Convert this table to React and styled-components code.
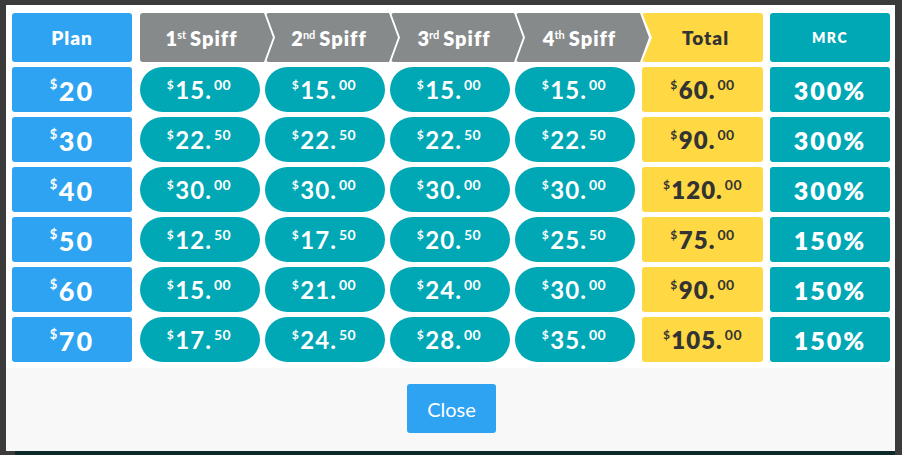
import React from "react";
import styled, { createGlobalStyle } from "styled-components";

const GlobalStyle = createGlobalStyle`
    html, body {
        margin: 0;
        padding: 0;
        background: #3b3b3b;
    }
    * {
        box-sizing: border-box;
    }
`;

const blue = "#2ea3f2";
const teal = "#00a8b5";
const yellow = "#ffd944";
const gray = "#878a8b";

const Page = styled.div`
    width: 902px;
    height: 455px;
    padding: 5px 7px 0 6px;
    display: flex;
    flex-direction: column;
    overflow: hidden;
`;

const Modal = styled.div`
    width: 889px;
    height: 446px;
    background: #fff;
    display: flex;
    flex-direction: column;
`;

const TableArea = styled.div`
    padding: 8px 5px 6px 6px;
`;

const Grid = styled.div`
    display: grid;
    grid-template-columns: 128px repeat(3, 125px) 126px 129px 120px;
    grid-template-rows: 49px repeat(6, 45px);
    row-gap: 5px;
    font-family: "Lato", "Liberation Sans", sans-serif;
`;

const Box = styled.div`
    width: ${(p) => p.$w || 120}px;
    height: 100%;
    margin-left: ${(p) => p.$ml || 0}px;
    display: flex;
    align-items: center;
    justify-content: center;
    border-radius: 3px;
    background: ${(p) => p.$bg};
    color: ${(p) => p.$fg || "#fff"};
    font-weight: 800;
`;

const HeadLabel = styled.span`
    font-size: ${(p) => p.$size || 19}px;
    font-weight: 800;
    letter-spacing: ${(p) => p.$ls ?? 1}px;
`;

const Chevron = styled.div`
    position: relative;
    z-index: 1;
    height: 100%;
    margin-left: ${(p) => (p.$notch ? 1 : 0)}px;
    width: calc(100% + ${(p) => (p.$notch ? 7 : 8)}px);
    background: ${gray};
    color: #fff;
    display: flex;
    align-items: center;
    justify-content: center;
    padding-left: ${(p) => (p.$notch ? 4 : 0)}px;
    padding-right: 10px;
    clip-path: ${(p) =>
        p.$notch
            ? "polygon(0 0, calc(100% - 9px) 0, 100% 50%, calc(100% - 9px) 100%, 0 100%, 9px 50%)"
            : "polygon(0 0, calc(100% - 9px) 0, 100% 50%, calc(100% - 9px) 100%, 0 100%)"};
    border-radius: 3px 0 0 3px;
`;

const TotalHead = styled(Box)`
    clip-path: polygon(0 0, 100% 0, 100% 100%, 0 100%, 10px 50%);
    padding-left: 6px;
`;

const Ord = styled.sup`
    font-size: 11px;
    vertical-align: 0;
    position: relative;
    top: -7px;
    margin-left: -1px;
    margin-right: 4px;
    font-weight: 700;
    letter-spacing: 0;
`;

const Pill = styled.div`
    width: 120px;
    height: 100%;
    border-radius: 23px;
    background: ${teal};
    color: #fff;
    display: flex;
    align-items: center;
    justify-content: center;
    padding-right: 2px;
`;

const Money = styled.span`
    font-size: 24px;
    font-weight: ${(p) => p.$weight || 700};
    line-height: 1;
    letter-spacing: 1px;
    display: inline-flex;
    align-items: flex-start;
`;

const PlanMoney = styled(Money)`
    font-size: 27px;
    font-weight: 900;
    letter-spacing: 2px;
    margin-top: 1px;
`;

const Small = styled.span`
    font-size: ${(p) => p.$size || 12}px;
    font-weight: 700;
    line-height: 1;
    letter-spacing: 0.5px;
    margin-top: ${(p) => p.$top || 0}px;
    margin-right: ${(p) => p.$mr || 0}px;
    margin-left: ${(p) => p.$ml || 0}px;
`;

const Percent = styled.span`
    font-size: 25px;
    font-weight: 800;
    letter-spacing: 2px;
`;

const Footer = styled.div`
    flex: 1;
    background: #f8f8f8;
    display: flex;
    justify-content: center;
    padding-top: 16px;
    padding-left: 2px;
`;

const CloseButton = styled.button`
    width: 89px;
    height: 49px;
    border: none;
    border-radius: 3px;
    background: ${blue};
    color: #fff;
    font-family: "Lato", "Liberation Sans", sans-serif;
    font-size: 20px;
    cursor: pointer;
`;

const Backdrop = styled.div`
    flex: 1;
    margin-left: 9px;
    background: #0c2a2a;
`;

const Price = ({ value, big }) => {
    const [whole, cents] = value.split(".");
    return (
        <Money $weight={big ? 800 : 700}>
            <Small $size={12} $top={1} $mr={1}>$</Small>
            {whole}.
            <Small $size={14} $top={0} $ml={2}>{cents}</Small>
        </Money>
    );
};

const PlanValue = ({ value }) => (
    <PlanMoney>
        <Small $size={13} $top={1} $mr={1}>$</Small>
        {value}
    </PlanMoney>
);

const rows = [
    { plan: "20", spiffs: ["15.00", "15.00", "15.00", "15.00"], total: "60.00", mrc: "300%" },
    { plan: "30", spiffs: ["22.50", "22.50", "22.50", "22.50"], total: "90.00", mrc: "300%" },
    { plan: "40", spiffs: ["30.00", "30.00", "30.00", "30.00"], total: "120.00", mrc: "300%" },
    { plan: "50", spiffs: ["12.50", "17.50", "20.50", "25.50"], total: "75.00", mrc: "150%" },
    { plan: "60", spiffs: ["15.00", "21.00", "24.00", "30.00"], total: "90.00", mrc: "150%" },
    { plan: "70", spiffs: ["17.50", "24.50", "28.00", "35.00"], total: "105.00", mrc: "150%" },
];

const spiffHeads = [
    ["1", "st"],
    ["2", "nd"],
    ["3", "rd"],
    ["4", "th"],
];

export default function App() {
    return (
        <>
            <GlobalStyle />
            <Page>
                <Modal>
                    <TableArea>
                        <Grid>
                            <Box $bg={blue}>
                                <HeadLabel>Plan</HeadLabel>
                            </Box>
                            {spiffHeads.map(([n, s], i) => (
                                <Chevron key={n} $notch={i > 0}>
                                    <HeadLabel $size={20}>
                                        {n}
                                        <Ord>{s}</Ord>
                                        Spiff
                                    </HeadLabel>
                                </Chevron>
                            ))}
                            <TotalHead $bg={yellow} $fg="#333" $w={121} $ml={1}>
                                <HeadLabel>Total</HeadLabel>
                            </TotalHead>
                            <Box $bg={teal}>
                                <HeadLabel $size={14} $ls={1.5}>MRC</HeadLabel>
                            </Box>

                            {rows.map((r) => (
                                <React.Fragment key={r.plan}>
                                    <Box $bg={blue}>
                                        <PlanValue value={r.plan} />
                                    </Box>
                                    {r.spiffs.map((s, i) => (
                                        <Pill key={i}>
                                            <Price value={s} />
                                        </Pill>
                                    ))}
                                    <Box $bg={yellow} $fg="#333" $w={121} $ml={1}>
                                        <Price value={r.total} big />
                                    </Box>
                                    <Box $bg={teal}>
                                        <Percent>{r.mrc}</Percent>
                                    </Box>
                                </React.Fragment>
                            ))}
                        </Grid>
                    </TableArea>
                    <Footer>
                        <CloseButton>Close</CloseButton>
                    </Footer>
                </Modal>
                <Backdrop />
            </Page>
        </>
    );
}
